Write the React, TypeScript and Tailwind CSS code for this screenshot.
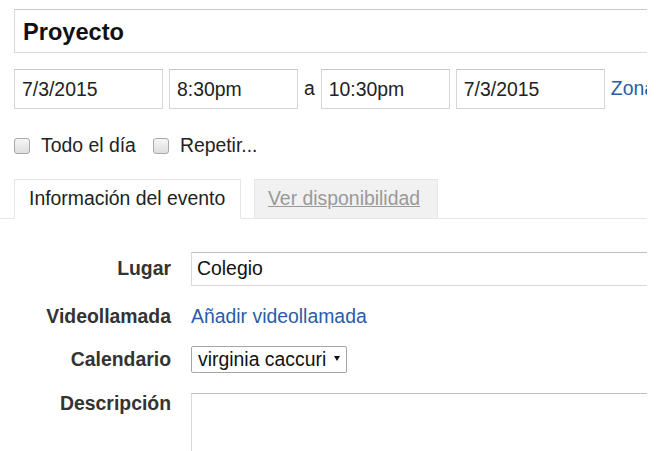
import React from "react";

const font = { fontFamily: '"Liberation Sans", Arial, sans-serif' };

function Box({ width, children }: { width: string; children: React.ReactNode }) {
  return (
    <div
      className={`${width} flex h-[40px] shrink-0 items-center border border-[#d6d6d6] border-t-[#c6c6c6] pl-[7px] pt-[1px] text-[19.4px] text-[#222]`}
    >
      {children}
    </div>
  );
}

function Check({ label }: { label: string }) {
  return (
    <label className="flex items-center">
      <span className="h-[16px] w-[16px] shrink-0 rounded-[3px] border border-[#a9a9a9] bg-gradient-to-b from-[#f6f6f6] to-[#dedede]" />
      <span className="ml-[11px] text-[19.4px] text-[#222]">{label}</span>
    </label>
  );
}

function Label({ children }: { children: React.ReactNode }) {
  return (
    <div className="w-[171px] shrink-0 text-right text-[19.4px] font-bold text-[#333]">
      {children}
    </div>
  );
}

export default function App() {
  return (
    <div className="h-[451px] w-[658px] overflow-hidden bg-white" style={font}>
      <div className="w-[647px] overflow-hidden pt-[9px]">
        <div className="pl-[14px]">
          <div className="flex h-[44px] w-[700px] items-center border border-[#d9d9d9] border-t-[#c8c8c8] pl-[8px] pt-[3px] text-[23.6px] font-bold text-[#111]">
            Proyecto
          </div>

          <div className="mt-[16px] flex items-center whitespace-nowrap">
            <Box width="w-[149px]">7/3/2015</Box>
            <div className="ml-[6px]" />
            <Box width="w-[129px]">8:30pm</Box>
            <span className="mx-[6px] text-[19.4px] text-[#222]">a</span>
            <Box width="w-[129px]">10:30pm</Box>
            <div className="ml-[6px]" />
            <Box width="w-[149px]">7/3/2015</Box>
            <a className="ml-[6px] text-[19.4px] text-[#2a5caa]">Zona horaria</a>
          </div>

          <div className="mt-[26px] flex h-[22px] items-center gap-[17px]">
            <Check label="Todo el día" />
            <Check label="Repetir..." />
          </div>
        </div>

        <div className="mt-[22px] flex h-[40px] items-end border-b border-[#e6e6e6] pl-[14px]">
          <div className="-mb-px flex h-[40px] w-[227px] items-center border border-b-white border-[#e6e6e6] bg-white pl-[14px] text-[19.4px] text-[#222]">
            Información del evento
          </div>
          <div className="-mb-px ml-[13px] flex h-[40px] w-[184px] items-center border border-[#e6e6e6] bg-[#f1f1f1] pl-[13px] text-[19.4px] text-[#999] underline">
            Ver disponibilidad
          </div>
        </div>

        <div className="mt-[33px] flex flex-col">
          <div className="flex items-center">
            <Label>Lugar</Label>
            <div className="ml-[20px] flex h-[34px] w-[520px] shrink-0 items-center border border-[#d9d9d9] border-t-[#bdbdbd] pl-[5px] text-[19.4px] text-[#111]">
              Colegio
            </div>
          </div>

          <div className="mt-[16px] flex items-center">
            <Label>Videollamada</Label>
            <a className="ml-[20px] text-[19.4px] text-[#2a5caa]">Añadir videollamada</a>
          </div>

          <div className="mt-[14px] flex items-center">
            <Label>Calendario</Label>
            <div className="ml-[20px] flex h-[27px] w-[156px] items-center rounded-[2px] border border-[#a6a6a6] pl-[6px] text-[19.4px] text-[#111]">
              virginia caccuri
              <svg className="ml-[8px] mt-[-3px]" width="6" height="5" viewBox="0 0 6 5">
                <path d="M0 0h6L3 5z" fill="#111" />
              </svg>
            </div>
          </div>

          <div className="mt-[19px] flex items-start">
            <Label>
              <div className="-mt-[4px]">Descripción</div>
            </Label>
            <div className="ml-[20px] h-[80px] w-[520px] shrink-0 border border-[#d9d9d9] border-t-[#bdbdbd]" />
          </div>
        </div>
      </div>
    </div>
  );
}
